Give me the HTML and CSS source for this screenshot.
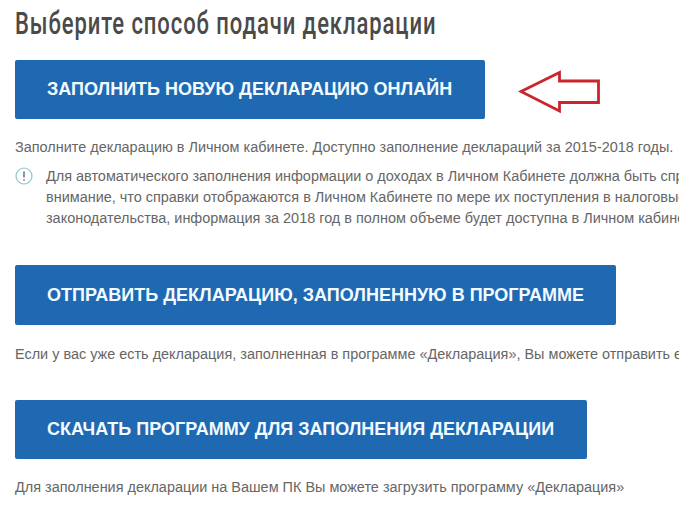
FILE: index.html
```html
<!DOCTYPE html>
<html lang="ru">
<head>
<meta charset="utf-8">
<title>Выберите способ подачи декларации</title>
<link rel="stylesheet" href="styles.css">
</head>
<body>
<main class="page">
  <h1 class="title">Выберите способ подачи декларации</h1>
  <section class="option option-first">
    <div class="action-row">
      <a class="btn btn-new" href="#">ЗАПОЛНИТЬ НОВУЮ ДЕКЛАРАЦИЮ ОНЛАЙН</a>
      <svg class="arrow" width="84" height="44" viewBox="0 0 84 44" aria-hidden="true">
        <path d="M3 21.5 L41.5 2.5 V11 H80.5 V32.5 H41.5 V41 Z" fill="none" stroke="#c9252f" stroke-width="2.8"/>
      </svg>
    </div>
    <p class="text text-first">Заполните декларацию в Личном кабинете. Доступно заполнение деклараций за 2015-2018 годы.</p>
    <div class="note">
      <svg class="note-icon" width="18" height="18" viewBox="0 0 18 18" aria-hidden="true">
        <circle cx="9" cy="9" r="8" fill="none" stroke="#8fc3cf" stroke-width="1.2"/>
        <path d="M9 4.5 V10.5 M9 12.2 V13.8" stroke="#5c7480" stroke-width="1.5" fill="none"/>
      </svg>
      <p class="text note-text">Для автоматического заполнения информации о доходах в Личном Кабинете должна быть справка<br>внимание, что справки отображаются в Личном Кабинете по мере их поступления в налоговые органы<br>законодательства, информация за 2018 год в полном объеме будет доступна в Личном кабинете</p>
    </div>
  </section>
  <section class="option option-second">
    <a class="btn btn-send" href="#">ОТПРАВИТЬ ДЕКЛАРАЦИЮ, ЗАПОЛНЕННУЮ В ПРОГРАММЕ</a>
    <p class="text text-second">Если у вас уже есть декларация, заполненная в программе «Декларация», Вы можете отправить её</p>
  </section>
  <section class="option option-third">
    <a class="btn btn-get" href="#">СКАЧАТЬ ПРОГРАММУ ДЛЯ ЗАПОЛНЕНИЯ ДЕКЛАРАЦИИ</a>
    <p class="text text-third">Для заполнения декларации на Вашем ПК Вы можете загрузить программу «Декларация»</p>
  </section>
</main>
</body>
</html>
```
FILE: styles.css
```css
html, body {
  margin: 0;
  padding: 0;
  background: #fff;
  overflow: hidden;
  height: 512px;
}
.page {
  width: 679px;
  height: 512px;
  overflow: hidden;
  padding: 0 0 0 15px;
  box-sizing: border-box;
  font-family: "Liberation Sans", Arial, sans-serif;
}
.title {
  margin: 0;
  padding-top: 6px;
  height: 60px;
  box-sizing: border-box;
  font-family: "Roboto", "Liberation Sans", sans-serif;
  font-size: 31px;
  line-height: 36px;
  font-weight: 500;
  letter-spacing: 1.3px;
  color: #4a4a48;
  white-space: nowrap;
  transform: scaleX(0.71);
  transform-origin: left center;
}
.action-row {
  display: flex;
  align-items: flex-start;
  gap: 33px;
}
.arrow {
  flex: none;
  margin-top: 10px;
}
.btn {
  display: flex;
  align-items: center;
  box-sizing: border-box;
  padding-left: 32px;
  border-radius: 2px;
  background: #1f69b3;
  color: #f2fbff;
  font-weight: 700;
  font-size: 18px;
  text-decoration: none;
  white-space: nowrap;
}
.btn-new { width: 470px; height: 59px; }
.btn-send { width: 601px; height: 60px; }
.btn-get { width: 572px; height: 59px; }
.text {
  margin: 0;
  font-size: 14.45px;
  line-height: 21px;
  color: #666;
  white-space: nowrap;
}
.text-first { margin-top: 18px; }
.note {
  display: flex;
  gap: 13px;
  margin-top: 8px;
}
.note-icon { flex: none; margin-top: 1px; }
.note-text { flex: none; }
.option-second { margin-top: 36px; }
.option-third { margin-top: 35px; }
.text-second { margin-top: 19px; }
.text-third { margin-top: 18px; }
```
